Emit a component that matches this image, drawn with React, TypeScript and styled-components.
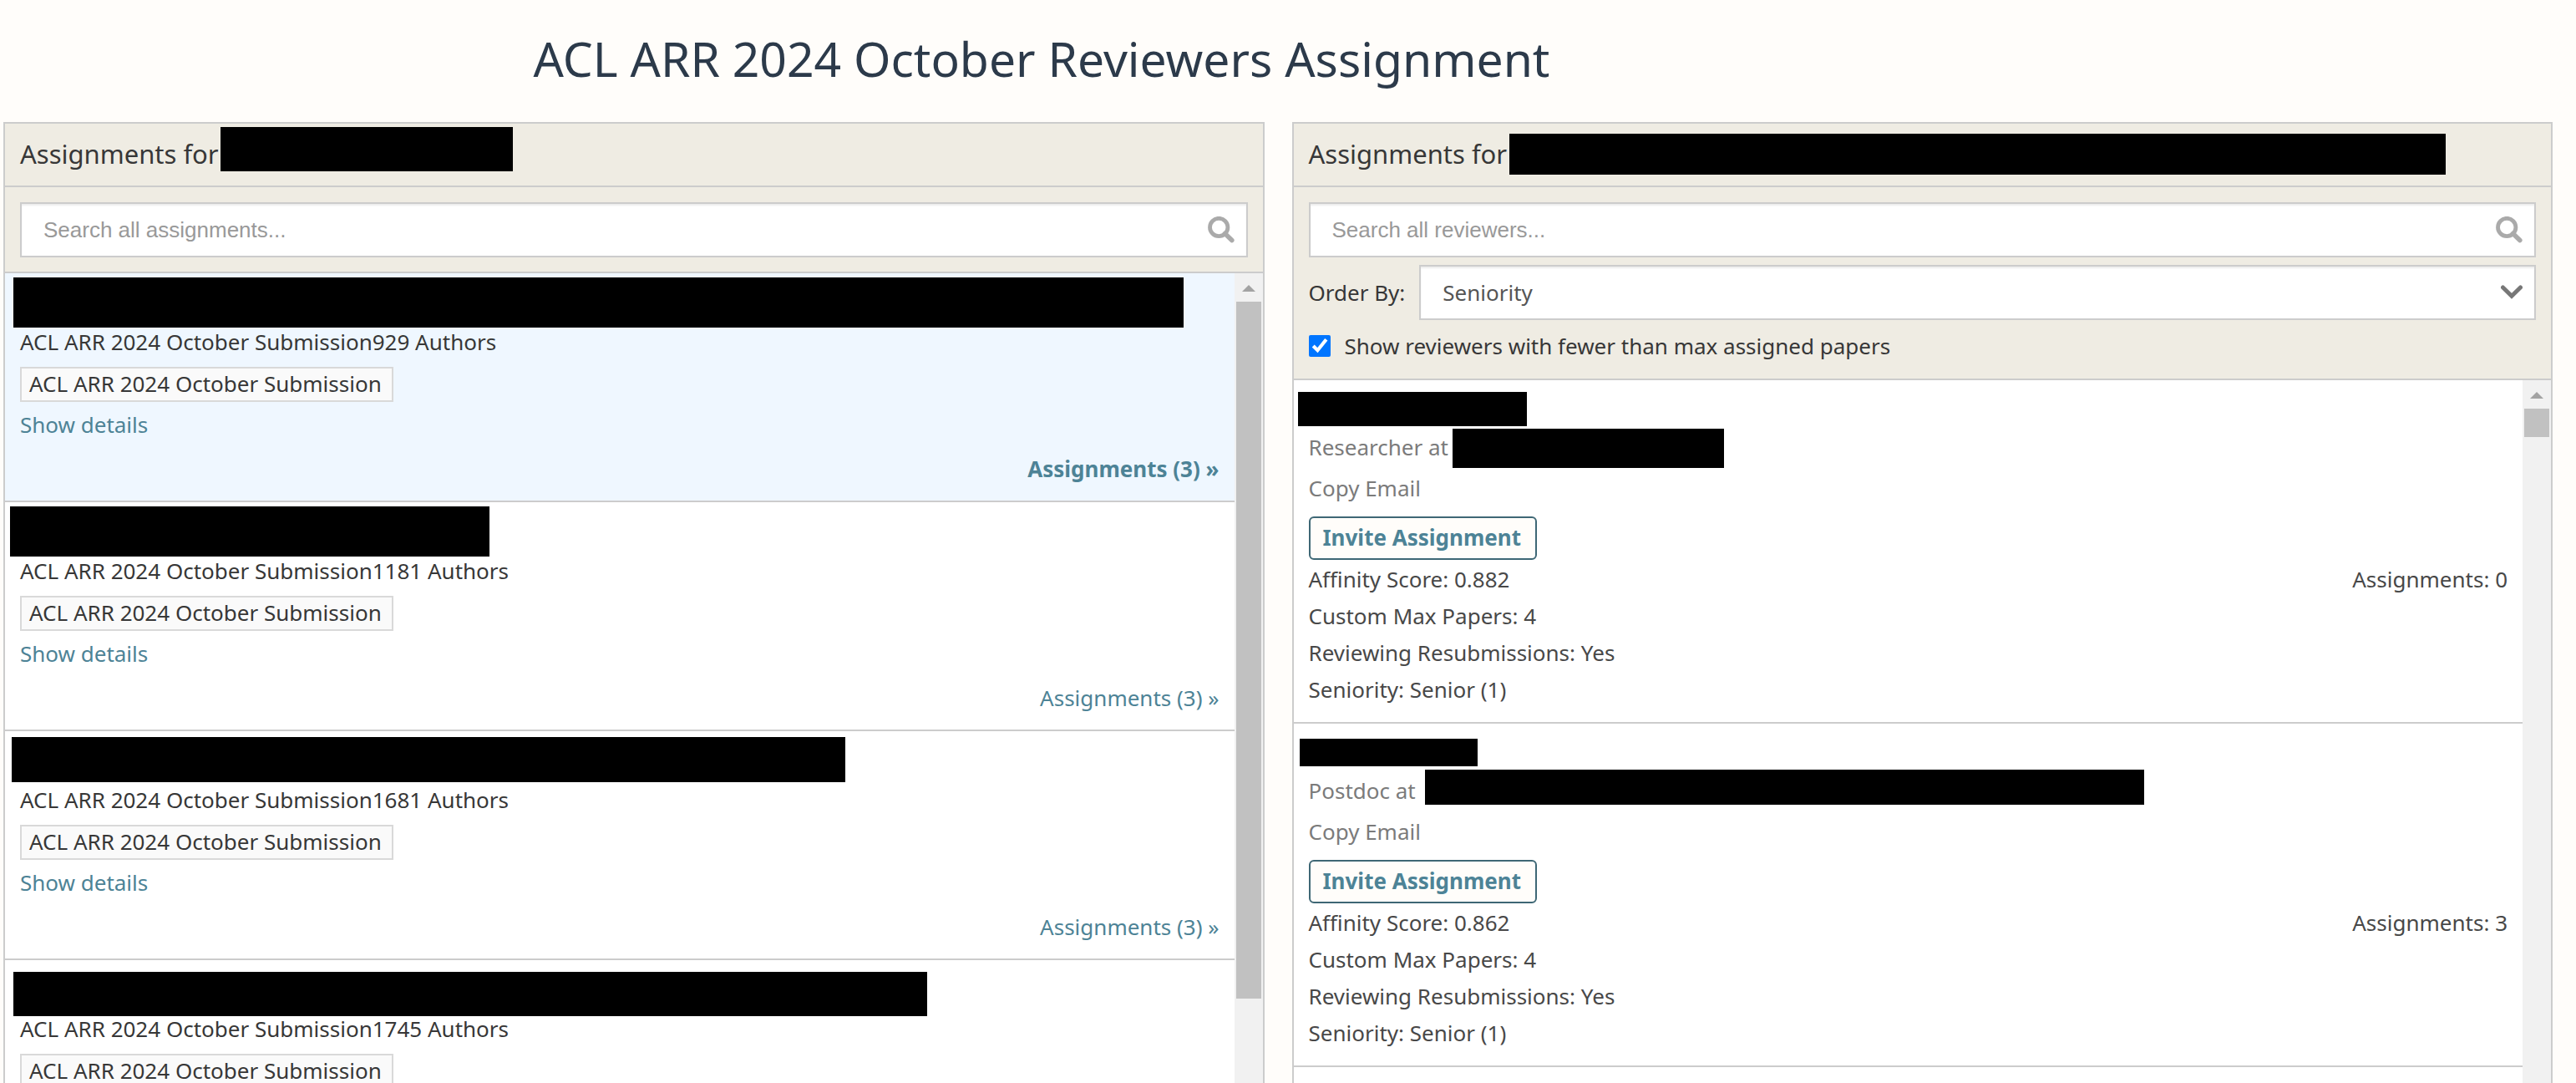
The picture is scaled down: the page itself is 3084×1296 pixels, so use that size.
import React from 'react';
import styled, { createGlobalStyle } from 'styled-components';

const sans = '"Noto Sans", "Open Sans", sans-serif';
const line = '#cccccc';
const teal = '#4d8396';

const GlobalStyle = createGlobalStyle`
  * { box-sizing: border-box; }
  body {
    margin: 0;
    background: #fffdfa;
    color: #373737;
    font-family: ${sans};
    font-size: 26px;
    line-height: 36px;
  }
`;

const Page = styled.div`
  display: flex;
  flex-direction: column;
  height: 100vh;
  overflow: hidden;
`;

const Title = styled.h1`
  margin: 0;
  padding: 31px 590px 37px 0;
  font-size: 57px;
  line-height: 78px;
  font-weight: 400;
  text-align: center;
  white-space: nowrap;
  color: #2c3a4a;
`;

const Columns = styled.main`
  flex: 1;
  min-height: 0;
  display: grid;
  grid-template-columns: minmax(0, 1fr) minmax(0, 1fr);
  grid-template-rows: minmax(0, 1fr);
  gap: 33px;
  padding: 0 28px 0 4px;
`;

const Panel = styled.section`
  display: flex;
  flex-direction: column;
  min-height: 0;
  border: 2px solid ${line};
  border-bottom: 0;
  background: #ffffff;
`;

const PanelHeader = styled.h2`
  position: relative;
  flex: none;
  margin: 0;
  padding: 0 18px 2px;
  border-bottom: 2px solid ${line};
  background: #efece3;
  font-size: 31px;
  line-height: 72px;
  font-weight: 400;
`;

const Filters = styled.form`
  flex: none;
  display: flex;
  flex-direction: column;
  padding: 18px 18px 17px;
  border-bottom: 2px solid ${line};
  background: #efece3;
`;

const Field = styled.div`
  position: relative;
  flex: 1;
  display: flex;
`;

const fieldBox = `
  width: 100%;
  height: 66px;
  margin: 0;
  padding: 0 26px;
  border: 2px solid ${line};
  border-radius: 0;
  background: #ffffff;
  box-shadow: inset 0 2px 2px rgba(0, 0, 0, 0.075);
  color: #555555;
  font-size: 26px;
  outline: 0;
`;

const SearchInput = styled.input`
  ${fieldBox}
  font-family: "Liberation Sans", Arial, sans-serif;
  &::placeholder { color: #999999; opacity: 1; }
`;

const Select = styled.select`
  ${fieldBox}
  appearance: none;
  font-family: ${sans};
`;

const FieldIcon = styled.svg`
  position: absolute;
  right: 16px;
  top: 0;
  bottom: 0;
  margin: auto 0;
  pointer-events: none;
`;

const OrderRow = styled.div`
  display: flex;
  align-items: center;
  gap: 17px;
  margin-top: 9px;
`;

const CheckRow = styled.label`
  display: flex;
  align-items: center;
  gap: 17px;
  margin: 13px 0 4px;
`;

const Checkbox = styled.input`
  width: 26px;
  height: 26px;
  margin: 0;
  accent-color: #0075ff;
`;

const Scroller = styled.div`
  flex: 1;
  min-height: 0;
  display: flex;
`;

const List = styled.ul`
  flex: 1;
  min-width: 0;
  margin: 0;
  padding: 0;
  overflow: hidden;
  list-style: none;
`;

const Track = styled.div`
  flex: none;
  display: flex;
  flex-direction: column;
  align-items: center;
  width: 34px;
  background: #f1f1f1;
`;

const ArrowUp = styled.div`
  margin: 14px 0 12px;
  border: 8px solid transparent;
  border-top: 0;
  border-bottom-color: #a3a3a3;
`;

const Thumb = styled.div<{ $length: string }>`
  width: 30px;
  height: ${(p) => p.$length};
  background: #c1c1c1;
`;

const Item = styled.li<{ $selected?: boolean }>`
  position: relative;
  display: flex;
  flex-direction: column;
  align-items: flex-start;
  padding: 20px 18px;
  border-bottom: 2px solid ${line};
  background: ${(p) => (p.$selected ? '#eff7ff' : '#ffffff')};
`;

const PaperTitle = styled.div`
  height: 44px;
`;

const Tag = styled.span`
  margin-top: 12px;
  padding: 0 12px 2px 9px;
  border: 2px solid #d9d9d9;
  background: #fafafa;
`;

const DetailsLink = styled.a`
  margin-top: 9px;
  color: ${teal};
  text-decoration: none;
`;

const EdgesLink = styled.a<{ $bold?: boolean }>`
  align-self: flex-end;
  margin-top: 17px;
  color: ${teal};
  font-weight: ${(p) => (p.$bold ? 700 : 400)};
  text-decoration: none;
`;

const ReviewerItem = styled(Item)`
  padding: 20px 18px 17px;
`;

const ReviewerName = styled.div`
  height: 42px;
`;

const Muted = styled.div`
  color: #7b7b7b;
`;

const CopyButton = styled.button`
  margin: 13px 0 16px;
  padding: 0;
  border: 0;
  background: none;
  color: #7b7b7b;
  font: inherit;
`;

const InviteButton = styled.button`
  padding: 0 17px 2px 15px;
  border: 2px solid #3e6775;
  border-radius: 6px;
  background: #fffdfa;
  color: ${teal};
  font-family: ${sans};
  font-size: 26px;
  line-height: 46px;
  font-weight: 700;
`;

const Stats = styled.div`
  align-self: stretch;
  display: flex;
  justify-content: space-between;
  margin-top: 1px;
  color: #484848;
  line-height: 44px;
`;

/* Black mark painted over a name or title. */
const Redaction = styled.span<{ $x: number; $y: number; $w: number; $h: number }>`
  position: absolute;
  left: ${(p) => p.$x}px;
  top: ${(p) => p.$y}px;
  width: ${(p) => p.$w}px;
  height: ${(p) => p.$h}px;
  background: #000000;
`;

type Mark = [number, number, number, number];

const Redacted = ({ mark: [x, y, w, h] }: { mark: Mark }) => (
  <Redaction $x={x} $y={y} $w={w} $h={h} />
);

const SearchIcon = () => (
  <FieldIcon width="32" height="32" viewBox="0 0 32 32" fill="none" stroke="#aaaaaa" aria-hidden="true">
    <circle cx="13.2" cy="13" r="10.7" strokeWidth="4.8" />
    <path d="M20.5 20.5 L28.8 28.6" strokeWidth="5.6" strokeLinecap="round" />
  </FieldIcon>
);

const ChevronIcon = () => (
  <FieldIcon width="26" height="18" viewBox="0 0 26 18" fill="none" stroke="#777777" aria-hidden="true">
    <path d="M2.5 3 L13 13.2 L23.5 3" strokeWidth="5" strokeLinecap="round" />
  </FieldIcon>
);

const Scrollbar = ({ length }: { length: string }) => (
  <Track aria-hidden="true">
    <ArrowUp />
    <Thumb $length={length} />
  </Track>
);

const papers: { number: number; mark: Mark }[] = [
  { number: 929, mark: [10, 5, 1401, 60] },
  { number: 1181, mark: [6, 5, 574, 60] },
  { number: 1681, mark: [8, 7, 998, 54] },
  { number: 1745, mark: [10, 14, 1094, 53] },
];

const reviewers: { role: string; score: string; assigned: number; name: Mark; place: Mark }[] = [
  { role: 'Researcher at', score: '0.882', assigned: 0, name: [5, 14, 274, 41], place: [190, 58, 325, 47] },
  { role: 'Postdoc at', score: '0.862', assigned: 3, name: [7, 18, 213, 33], place: [157, 55, 861, 42] },
];

export default function App() {
  return (
    <Page>
      <GlobalStyle />
      <Title>ACL ARR 2024 October Reviewers Assignment</Title>
      <Columns>
        <Panel>
          <PanelHeader>
            Assignments for
            <Redacted mark={[258, 4, 350, 53]} />
          </PanelHeader>
          <Filters>
            <Field>
              <SearchInput type="text" placeholder="Search all assignments..." aria-label="Search all assignments" />
              <SearchIcon />
            </Field>
          </Filters>
          <Scroller>
            <List>
              {papers.map((paper, i) => (
                <Item key={paper.number} $selected={i === 0}>
                  <PaperTitle>
                    <Redacted mark={paper.mark} />
                  </PaperTitle>
                  <div>ACL ARR 2024 October Submission{paper.number} Authors</div>
                  <Tag>ACL ARR 2024 October Submission</Tag>
                  <DetailsLink href="#details">Show details</DetailsLink>
                  <EdgesLink href="#assignments" $bold={i === 0}>
                    Assignments (3) »
                  </EdgesLink>
                </Item>
              ))}
            </List>
            <Scrollbar length="834px" />
          </Scroller>
        </Panel>

        <Panel>
          <PanelHeader>
            Assignments for
            <Redacted mark={[258, 12, 1121, 49]} />
          </PanelHeader>
          <Filters>
            <Field>
              <SearchInput type="text" placeholder="Search all reviewers..." aria-label="Search all reviewers" />
              <SearchIcon />
            </Field>
            <OrderRow>
              <label htmlFor="order-by">Order By:</label>
              <Field>
                <Select id="order-by" defaultValue="Seniority">
                  <option>Seniority</option>
                </Select>
                <ChevronIcon />
              </Field>
            </OrderRow>
            <CheckRow>
              <Checkbox type="checkbox" defaultChecked />
              Show reviewers with fewer than max assigned papers
            </CheckRow>
          </Filters>
          <Scroller>
            <List>
              {reviewers.map((reviewer) => (
                <ReviewerItem key={reviewer.score}>
                  <ReviewerName>
                    <Redacted mark={reviewer.name} />
                  </ReviewerName>
                  <Muted>
                    {reviewer.role}
                    <Redacted mark={reviewer.place} />
                  </Muted>
                  <CopyButton type="button">Copy Email</CopyButton>
                  <InviteButton type="button">Invite Assignment</InviteButton>
                  <Stats>
                    <div>
                      <div>Affinity Score: {reviewer.score}</div>
                      <div>Custom Max Papers: 4</div>
                      <div>Reviewing Resubmissions: Yes</div>
                      <div>Seniority: Senior (1)</div>
                    </div>
                    <div>Assignments: {reviewer.assigned}</div>
                  </Stats>
                </ReviewerItem>
              ))}
            </List>
            <Scrollbar length="34px" />
          </Scroller>
        </Panel>
      </Columns>
    </Page>
  );
}
